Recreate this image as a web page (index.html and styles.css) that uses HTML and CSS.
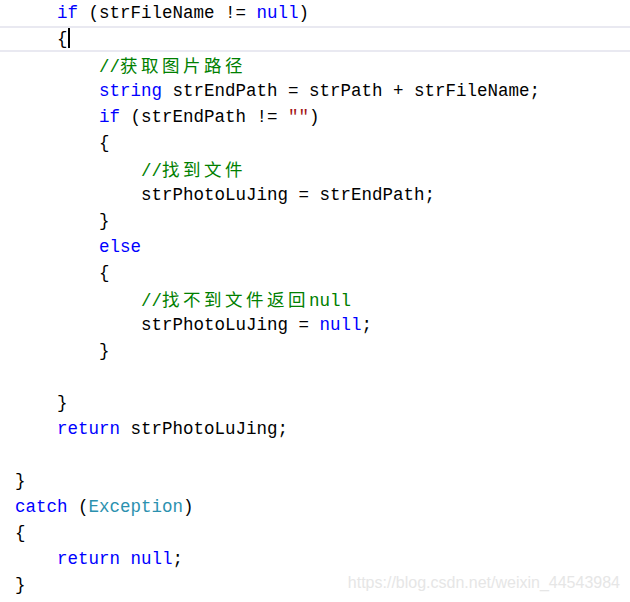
FILE: index.html
```html
<!DOCTYPE html>
<html>
<head>
<meta charset="utf-8">
<link rel="stylesheet" href="styles.css">
</head>
<body>
<div class="editor">
<div class="line">    <span class="kw">if</span> (strFileName != <span class="kw">null</span>)</div>
<div class="line current">    {<span class="caret"></span></div>
<div class="line">        <span class="cm">//<span class="cjk">获取图片路径</span></span></div>
<div class="line">        <span class="kw">string</span> strEndPath = strPath + strFileName;</div>
<div class="line">        <span class="kw">if</span> (strEndPath != <span class="str">""</span>)</div>
<div class="line">        {</div>
<div class="line">            <span class="cm">//<span class="cjk">找到文件</span></span></div>
<div class="line">            strPhotoLuJing = strEndPath;</div>
<div class="line">        }</div>
<div class="line">        <span class="kw">else</span></div>
<div class="line">        {</div>
<div class="line">            <span class="cm">//<span class="cjk">找不到文件返回</span>null</span></div>
<div class="line">            strPhotoLuJing = <span class="kw">null</span>;</div>
<div class="line">        }</div>
<div class="line"> </div>
<div class="line">    }</div>
<div class="line">    <span class="kw">return</span> strPhotoLuJing;</div>
<div class="line"> </div>
<div class="line">}</div>
<div class="line"><span class="kw">catch</span> (<span class="type">Exception</span>)</div>
<div class="line">{</div>
<div class="line">    <span class="kw">return</span> <span class="kw">null</span>;</div>
<div class="line">}</div>
<div class="watermark">https://blog.csdn.net/weixin_44543984</div>
</div>
</body>
</html>
```

FILE: styles.css
```css
html, body {
  margin: 0;
  padding: 0;
  background: #ffffff;
}
.editor {
  position: relative;
  width: 630px;
  height: 602px;
  overflow: hidden;
  font-family: "Liberation Mono", "Noto Sans CJK SC", monospace;
  font-size: 17.5px;
  color: #000000;
}
.line {
  height: 26px;
  line-height: 26px;
  white-space: pre;
  padding-left: 15px;
  box-sizing: border-box;
}
.line.current {
  border-top: 2px solid #e9e9f1;
  border-bottom: 2px solid #e9e9f1;
  line-height: 22px;
}
.caret {
  display: inline-block;
  width: 2px;
  height: 20px;
  background: #000000;
  vertical-align: middle;
  margin-left: 0px;
  position: relative;
  top: -1px;
}
.kw { color: #0000ff; }
.cm { color: #008000; }
.str { color: #a31515; }
.type { color: #2b91af; }
.cjk {
  font-family: "Noto Sans CJK SC", sans-serif;
  letter-spacing: 3.5px;
}
.watermark {
  position: absolute;
  right: 10px;
  top: 571px;
  font-family: "Liberation Sans", Arial, sans-serif;
  font-size: 16px;
  color: #e6e6e6;
  line-height: 24px;
}
```
